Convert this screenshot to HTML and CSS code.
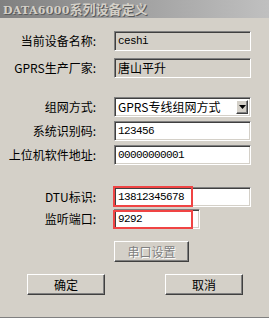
FILE: index.html
```html
<!DOCTYPE html>
<html lang="zh">
<head>
<meta charset="utf-8" />
<title>DATA6000系列设备定义</title>
<link rel="stylesheet" href="styles.css">
</head>
<body>
<div class="window">
  <div class="titlebar"><span class="title"><b class="latin">DATA6000</b>系列设备定义</span></div>

  <div class="group g1">
    <div class="label">当前设备名称:</div>
    <div class="field readonly mono">ceshi</div>
    <div class="label">GPRS生产厂家:</div>
    <div class="field readonly">唐山平升</div>
  </div>

  <div class="group g2">
    <div class="label">组网方式:</div>
    <div class="field combo"><span class="combo-text">GPRS专线组网方式</span><span class="drop"><svg width="7" height="4" viewBox="0 0 7 4"><path d="M0 0H7L3.5 4Z" fill="#000"/></svg></span></div>
    <div class="label">系统识别码:</div>
    <div class="field mono">123456</div>
    <div class="label">上位机软件地址:</div>
    <div class="field mono">00000000001</div>
  </div>

  <div class="group g3">
    <div class="label">DTU标识:</div>
    <div class="cell"><div class="field mono">13812345678</div><span class="mark mark-dtu"></span></div>
    <div class="label">监听端口:</div>
    <div class="cell"><div class="field mono short">9292</div><span class="mark mark-port"></span></div>
  </div>

  <div class="group g4">
    <div></div>
    <div><button class="btn disabled">串口设置</button></div>
  </div>

  <div class="actions">
    <button class="btn wide">确定</button>
    <button class="btn wide">取消</button>
  </div>
</div>
</body>
</html>
```

FILE: styles.css
```css
body {
  margin:0; background:#d4d0c8;
  font-family:"Noto Sans CJK SC","Liberation Sans",sans-serif; font-size:12px; color:#000;
}
.window {
  width:269px; height:318px; box-sizing:border-box;
  background:#d4d0c8; border-bottom:1px solid #808080;
}
.titlebar {
  height:18px; background:linear-gradient(to right,#808080,#c0c0c0);
  padding-left:3px;
}
.title {
  display:inline-block; color:#d4d0c8; font-weight:700; font-size:13px; line-height:18px;
  text-shadow:1px 1px 0 #5a5a5a;
}
.title .latin { font-family:"DejaVu Serif",serif; font-size:11px; letter-spacing:0.3px; }

.group {
  display:grid; grid-template-columns:96px 137px; column-gap:18px;
  grid-auto-rows:20px; align-items:center;
}
.g1 { margin-top:13px; row-gap:7px; }
.g2 { margin-top:19px; row-gap:4px; }
.g3 { margin-top:22px; row-gap:2px; }
.g4 { margin-top:12px; grid-auto-rows:21px; }

.label { text-align:right; line-height:20px; white-space:nowrap; }

.field {
  height:20px; box-sizing:border-box; background:#fff;
  border:1px solid; border-color:#808080 #fff #fff #808080;
  box-shadow:inset 1px 1px 0 #404040, inset -1px -1px 0 #d4d0c8;
  padding-left:3px; line-height:18px; white-space:nowrap; overflow:hidden;
}
.field.readonly { background:#d4d0c8; }
.field.short { width:86px; }
.mono { font-family:"Liberation Mono","DejaVu Sans Mono",monospace; font-size:11px; letter-spacing:-0.6px; }

.combo { display:flex; align-items:center; justify-content:space-between; padding-right:2px; }
.combo-text { line-height:18px; }
.drop {
  width:12px; height:14px; box-sizing:border-box; background:#d4d0c8;
  border:1px solid; border-color:#fff #404040 #404040 #fff;
  box-shadow:inset -1px -1px 0 #808080;
  display:flex; align-items:center; justify-content:center;
}

.cell { position:relative; height:20px; }
.mark { position:absolute; border:2px solid #f04444; box-sizing:border-box; pointer-events:none; }
.mark-dtu { left:-1px; top:-1px; width:80px; height:21px; }
.mark-port { left:-1px; top:1px; width:80px; height:19px; }

.btn {
  font-family:"Noto Sans CJK SC",sans-serif; font-size:12px; color:#000;
  height:21px; width:75px; padding:0; background:#d4d0c8;
  border:1px solid; border-color:#fff #404040 #404040 #fff;
  box-shadow:inset -1px -1px 0 #808080; line-height:18px;
}
.btn.disabled { color:#808080; text-shadow:1px 1px 0 #fff; }
.btn.wide { width:78px; }

.actions { display:flex; gap:60px; padding-left:27px; margin-top:12px; }
```
